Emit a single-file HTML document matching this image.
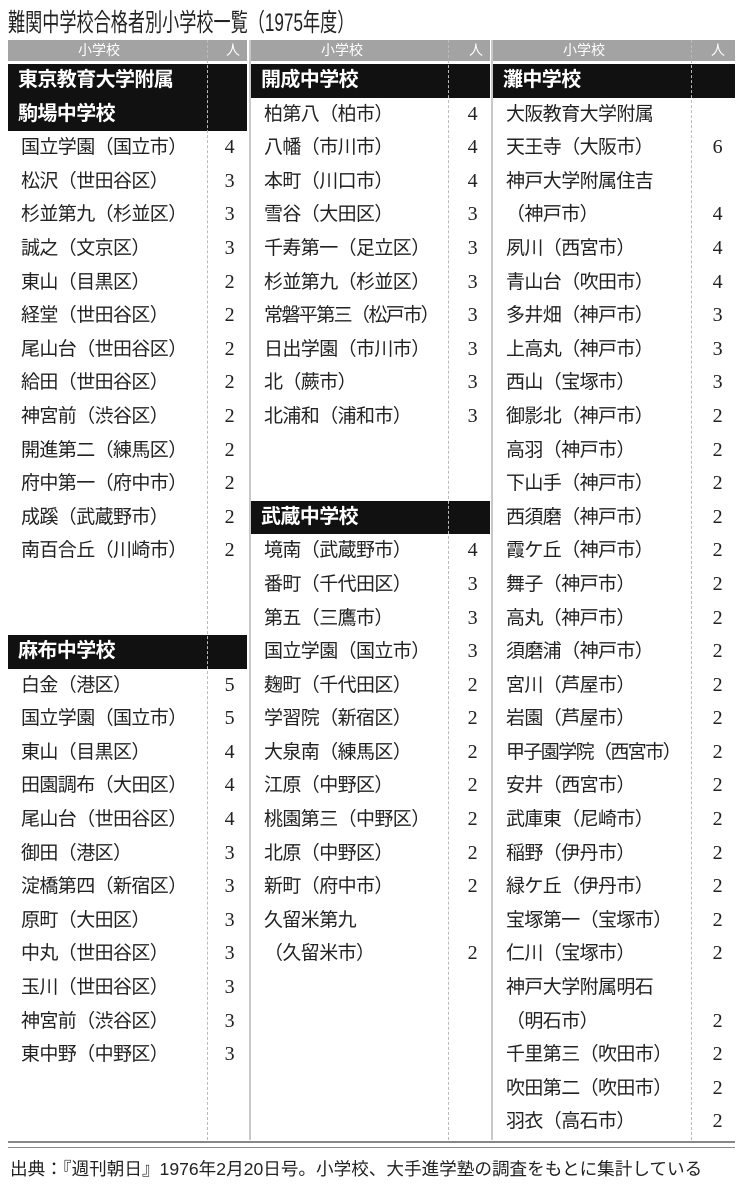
<!DOCTYPE html>
<html><head><meta charset="utf-8"><style>
body{margin:0;width:741px;height:1186px;background:#fff;position:relative;overflow:hidden;font-family:"Liberation Sans","Noto Sans CJK JP",sans-serif;color:#222}
.title{position:absolute;left:8px;top:3px;font-size:25px;color:#222;white-space:nowrap;transform:scaleX(0.685);transform-origin:left top}
.hbar{position:absolute;top:40px;height:21px;background:#a3a3a3;color:#fff;font-size:14px;line-height:21px}
.col{position:absolute;top:64px}
.r{height:33.6px;line-height:33.6px;font-size:19px;position:relative;white-space:nowrap;letter-spacing:-0.6px}
.r .n{position:absolute;right:13px;top:0;font-family:"Liberation Serif",serif;font-size:20px}
.r .t{padding-left:13px}
.b{background:#111;color:#fff;font-weight:bold;font-size:20px}
.dash{position:absolute;top:40px;height:1100px;border-left:1.5px dashed #bbb}
.vl{position:absolute;top:40px;height:1100px;width:2px;background:#c8c8c8}
</style></head><body>
<div class="title">難関中学校合格者別小学校一覧（1975年度）</div>
<div class="hbar" style="left:8px;width:239px"><span style="position:absolute;left:70px">小学校</span><span style="position:absolute;left:218px">人</span></div>
<div class="hbar" style="left:251px;width:239px"><span style="position:absolute;left:70px">小学校</span><span style="position:absolute;left:218px">人</span></div>
<div class="hbar" style="left:493px;width:242px"><span style="position:absolute;left:70px">小学校</span><span style="position:absolute;left:218px">人</span></div>

<div class="col" style="left:8px;width:239px">
<div class="r b"><span class="t" style="padding-left:10px">東京教育大学附属</span></div>
<div class="r b"><span class="t" style="padding-left:10px">駒場中学校</span></div>
<div class="r"><span class="t">国立学園（国立市）</span><span class="n">4</span></div>
<div class="r"><span class="t">松沢（世田谷区）</span><span class="n">3</span></div>
<div class="r"><span class="t">杉並第九（杉並区）</span><span class="n">3</span></div>
<div class="r"><span class="t">誠之（文京区）</span><span class="n">3</span></div>
<div class="r"><span class="t">東山（目黒区）</span><span class="n">2</span></div>
<div class="r"><span class="t">経堂（世田谷区）</span><span class="n">2</span></div>
<div class="r"><span class="t">尾山台（世田谷区）</span><span class="n">2</span></div>
<div class="r"><span class="t">給田（世田谷区）</span><span class="n">2</span></div>
<div class="r"><span class="t">神宮前（渋谷区）</span><span class="n">2</span></div>
<div class="r"><span class="t">開進第二（練馬区）</span><span class="n">2</span></div>
<div class="r"><span class="t">府中第一（府中市）</span><span class="n">2</span></div>
<div class="r"><span class="t">成蹊（武蔵野市）</span><span class="n">2</span></div>
<div class="r"><span class="t">南百合丘（川崎市）</span><span class="n">2</span></div>
<div class="r"></div><div class="r"></div>
<div class="r b"><span class="t" style="padding-left:10px">麻布中学校</span></div>
<div class="r"><span class="t">白金（港区）</span><span class="n">5</span></div>
<div class="r"><span class="t">国立学園（国立市）</span><span class="n">5</span></div>
<div class="r"><span class="t">東山（目黒区）</span><span class="n">4</span></div>
<div class="r"><span class="t">田園調布（大田区）</span><span class="n">4</span></div>
<div class="r"><span class="t">尾山台（世田谷区）</span><span class="n">4</span></div>
<div class="r"><span class="t">御田（港区）</span><span class="n">3</span></div>
<div class="r"><span class="t">淀橋第四（新宿区）</span><span class="n">3</span></div>
<div class="r"><span class="t">原町（大田区）</span><span class="n">3</span></div>
<div class="r"><span class="t">中丸（世田谷区）</span><span class="n">3</span></div>
<div class="r"><span class="t">玉川（世田谷区）</span><span class="n">3</span></div>
<div class="r"><span class="t">神宮前（渋谷区）</span><span class="n">3</span></div>
<div class="r"><span class="t">東中野（中野区）</span><span class="n">3</span></div>
</div>

<div class="col" style="left:251px;width:239px">
<div class="r b"><span class="t" style="padding-left:10px">開成中学校</span></div>
<div class="r"><span class="t">柏第八（柏市）</span><span class="n">4</span></div>
<div class="r"><span class="t">八幡（市川市）</span><span class="n">4</span></div>
<div class="r"><span class="t">本町（川口市）</span><span class="n">4</span></div>
<div class="r"><span class="t">雪谷（大田区）</span><span class="n">3</span></div>
<div class="r"><span class="t">千寿第一（足立区）</span><span class="n">3</span></div>
<div class="r"><span class="t">杉並第九（杉並区）</span><span class="n">3</span></div>
<div class="r"><span class="t" style="letter-spacing:-1.6px">常磐平第三（松戸市）</span><span class="n">3</span></div>
<div class="r"><span class="t">日出学園（市川市）</span><span class="n">3</span></div>
<div class="r"><span class="t">北（蕨市）</span><span class="n">3</span></div>
<div class="r"><span class="t">北浦和（浦和市）</span><span class="n">3</span></div>
<div class="r"></div><div class="r"></div>
<div class="r b"><span class="t" style="padding-left:10px">武蔵中学校</span></div>
<div class="r"><span class="t">境南（武蔵野市）</span><span class="n">4</span></div>
<div class="r"><span class="t">番町（千代田区）</span><span class="n">3</span></div>
<div class="r"><span class="t">第五（三鷹市）</span><span class="n">3</span></div>
<div class="r"><span class="t">国立学園（国立市）</span><span class="n">3</span></div>
<div class="r"><span class="t">麹町（千代田区）</span><span class="n">2</span></div>
<div class="r"><span class="t">学習院（新宿区）</span><span class="n">2</span></div>
<div class="r"><span class="t">大泉南（練馬区）</span><span class="n">2</span></div>
<div class="r"><span class="t">江原（中野区）</span><span class="n">2</span></div>
<div class="r"><span class="t">桃園第三（中野区）</span><span class="n">2</span></div>
<div class="r"><span class="t">北原（中野区）</span><span class="n">2</span></div>
<div class="r"><span class="t">新町（府中市）</span><span class="n">2</span></div>
<div class="r"><span class="t">久留米第九</span></div>
<div class="r"><span class="t">（久留米市）</span><span class="n">2</span></div>
</div>

<div class="col" style="left:493px;width:242px">
<div class="r b"><span class="t" style="padding-left:10px">灘中学校</span></div>
<div class="r"><span class="t">大阪教育大学附属</span></div>
<div class="r"><span class="t">天王寺（大阪市）</span><span class="n">6</span></div>
<div class="r"><span class="t">神戸大学附属住吉</span></div>
<div class="r"><span class="t">（神戸市）</span><span class="n">4</span></div>
<div class="r"><span class="t">夙川（西宮市）</span><span class="n">4</span></div>
<div class="r"><span class="t">青山台（吹田市）</span><span class="n">4</span></div>
<div class="r"><span class="t">多井畑（神戸市）</span><span class="n">3</span></div>
<div class="r"><span class="t">上高丸（神戸市）</span><span class="n">3</span></div>
<div class="r"><span class="t">西山（宝塚市）</span><span class="n">3</span></div>
<div class="r"><span class="t">御影北（神戸市）</span><span class="n">2</span></div>
<div class="r"><span class="t">高羽（神戸市）</span><span class="n">2</span></div>
<div class="r"><span class="t">下山手（神戸市）</span><span class="n">2</span></div>
<div class="r"><span class="t">西須磨（神戸市）</span><span class="n">2</span></div>
<div class="r"><span class="t">霞ケ丘（神戸市）</span><span class="n">2</span></div>
<div class="r"><span class="t">舞子（神戸市）</span><span class="n">2</span></div>
<div class="r"><span class="t">高丸（神戸市）</span><span class="n">2</span></div>
<div class="r"><span class="t">須磨浦（神戸市）</span><span class="n">2</span></div>
<div class="r"><span class="t">宮川（芦屋市）</span><span class="n">2</span></div>
<div class="r"><span class="t">岩園（芦屋市）</span><span class="n">2</span></div>
<div class="r"><span class="t" style="letter-spacing:-1.6px">甲子園学院（西宮市）</span><span class="n">2</span></div>
<div class="r"><span class="t">安井（西宮市）</span><span class="n">2</span></div>
<div class="r"><span class="t">武庫東（尼崎市）</span><span class="n">2</span></div>
<div class="r"><span class="t">稲野（伊丹市）</span><span class="n">2</span></div>
<div class="r"><span class="t">緑ケ丘（伊丹市）</span><span class="n">2</span></div>
<div class="r"><span class="t">宝塚第一（宝塚市）</span><span class="n">2</span></div>
<div class="r"><span class="t">仁川（宝塚市）</span><span class="n">2</span></div>
<div class="r"><span class="t">神戸大学附属明石</span></div>
<div class="r"><span class="t">（明石市）</span><span class="n">2</span></div>
<div class="r"><span class="t">千里第三（吹田市）</span><span class="n">2</span></div>
<div class="r"><span class="t">吹田第二（吹田市）</span><span class="n">2</span></div>
<div class="r"><span class="t">羽衣（高石市）</span><span class="n">2</span></div>
</div>

<div class="dash" style="left:207px"></div>
<div class="dash" style="left:448px"></div>
<div class="dash" style="left:691px"></div>
<div class="vl" style="left:249px"></div>
<div class="vl" style="left:491px"></div>
<div style="position:absolute;left:8px;top:1141px;width:727px;height:4px;border-top:2px solid #888;border-bottom:1px solid #888"></div>
<div style="position:absolute;left:10px;top:1156px;font-size:17.6px;white-space:nowrap">出典：『週刊朝日』1976年2月20日号。小学校、大手進学塾の調査をもとに集計している</div>
</body></html>
